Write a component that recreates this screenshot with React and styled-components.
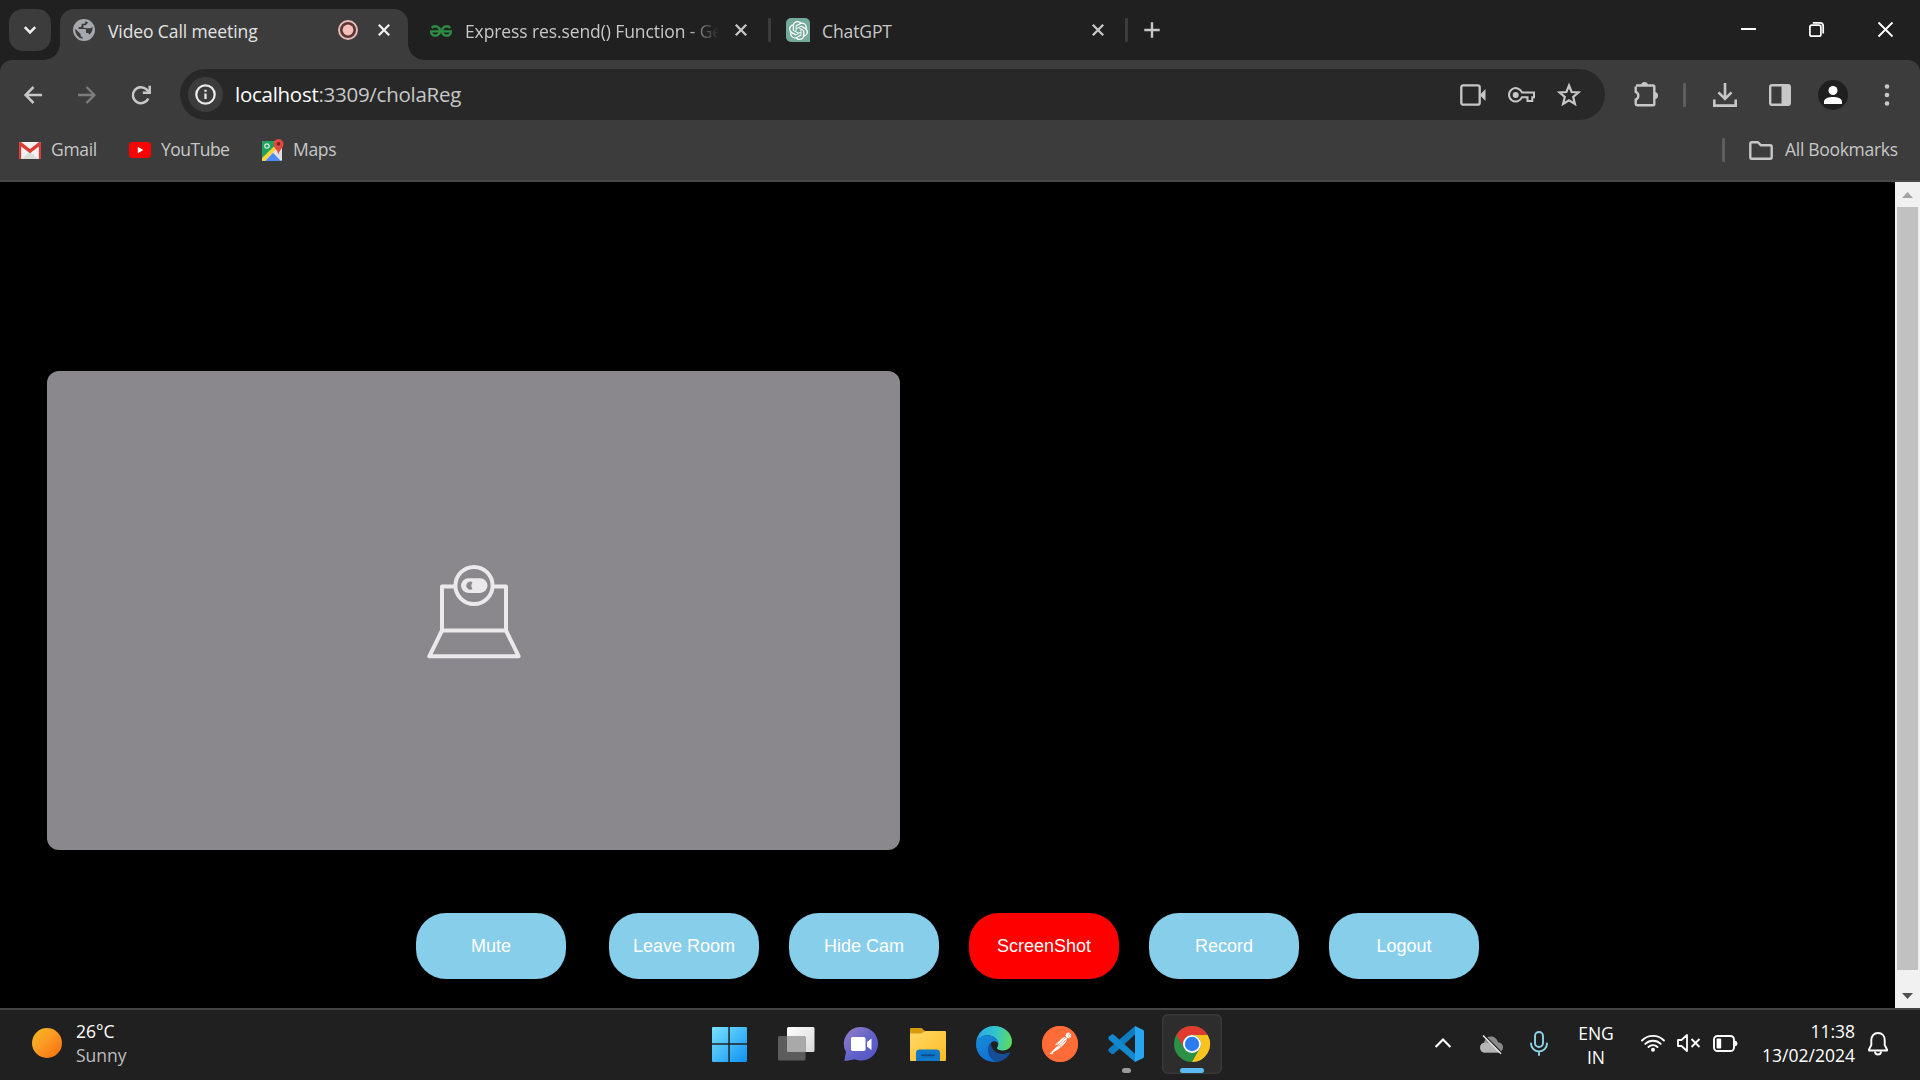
import React from "react";
import styled, { createGlobalStyle } from "styled-components";
import { SiOpenai, SiGeeksforgeeks, SiPostman } from "react-icons/si";

const Global = createGlobalStyle`
  *, *::before, *::after { box-sizing: border-box; }
  html, body { margin: 0; padding: 0; background: #000; overflow: hidden; }
  body { font-family: "Open Sans", "Noto Sans", sans-serif; }
`;

const Screen = styled.div`
  width: 1920px;
  height: 1080px;
  display: flex;
  flex-direction: column;
  background: #202020;
`;

/* ---------- shared ---------- */
const Glyph = styled.svg`
  display: block;
  flex: none;
  overflow: visible;
  margin-left: ${(p) => p.$ml || 0}px;
  margin-top: ${(p) => p.$mt || 0}px;
`;

function Icon({ w, h, ml, mt, children, ...rest }) {
  return (
    <Glyph $ml={ml} $mt={mt} width={w} height={h} viewBox={`0 0 ${w} ${h}`} fill="none" {...rest}>
      {children}
    </Glyph>
  );
}

const Label = styled.span`
  flex: none;
  width: ${(p) => (p.$w ? `${p.$w}px` : "auto")};
  margin-left: ${(p) => p.$ml || 0}px;
  font-size: ${(p) => p.$size || 17.5}px;
  line-height: 24px;
  letter-spacing: ${(p) => p.$ls || 0}px;
  color: ${(p) => p.$color || "#c7c7c7"};
  white-space: nowrap;
`;

const BookmarkLabel = styled(Label)`
  margin-top: -2px;
`;

const Divider = styled.div`
  flex: none;
  width: 3px;
  height: 24px;
  border-radius: 1px;
  margin-left: ${(p) => p.$ml || 0}px;
  background: ${(p) => p.$color || "#3c3c3c"};
`;

/* ---------- tab strip ---------- */
const TabStrip = styled.header`
  flex: none;
  height: 60px;
  padding-left: 9px;
  display: flex;
  align-items: center;
  background: #202020;
`;

const TabSearch = styled.button`
  flex: none;
  width: 42px;
  height: 42px;
  border: 0;
  padding: 0;
  border-radius: 14px;
  display: flex;
  align-items: center;
  justify-content: center;
  background: #3c3c3c;
`;

const ActiveTab = styled.div`
  position: relative;
  flex: none;
  align-self: flex-end;
  width: 348px;
  height: 51px;
  margin-left: 9px;
  padding-bottom: 9px;
  border-radius: 14px 14px 0 0;
  display: flex;
  align-items: center;
  background: #3c3c3c;

  &::before,
  &::after {
    content: "";
    position: absolute;
    bottom: 0;
    width: 16px;
    height: 16px;
  }
  &::before {
    left: -16px;
    background: radial-gradient(circle at 0 0, transparent 15.5px, #3c3c3c 16px);
  }
  &::after {
    right: -16px;
    background: radial-gradient(circle at 100% 0, transparent 15.5px, #3c3c3c 16px);
  }
`;

const TabTitle = styled.div`
  flex: none;
  width: ${(p) => p.$w}px;
  margin-left: ${(p) => p.$ml}px;
  margin-top: 2px;
  white-space: nowrap;
  font-size: 17.5px;
  line-height: 24px;
  letter-spacing: ${(p) => p.$ls || 0}px;
  color: ${(p) => p.$color || "#c7c7c7"};
  ${(p) => p.$fade && "mask-image: linear-gradient(90deg, #000 222px, transparent 254px);"}
`;

const GfgMark = styled(SiGeeksforgeeks)`
  flex: none;
  width: 22px;
  height: 22px;
  margin-left: 22px;
  margin-top: 2px;
  color: #2f8d46;
  stroke: #2f8d46;
  stroke-width: 0.6px;
`;

const GptBadge = styled.div`
  flex: none;
  width: 24px;
  height: 24px;
  margin-left: 15px;
  border-radius: 5px 5px 0 5px;
  display: flex;
  align-items: center;
  justify-content: center;
  background: #74aa9c;
  color: #fff;
  font-size: 19px;
`;

/* ---------- toolbar ---------- */
const ToolbarBack = styled.div`
  flex: none;
  height: 122px;
  display: flex;
  flex-direction: column;
  background: #3c3c3c;
  border-radius: 12px 12px 0 0;
  border-bottom: 2px solid #484848;
`;

const Toolbar = styled.div`
  flex: none;
  height: 69px;
  display: flex;
  align-items: center;
`;

const AddressBar = styled.div`
  flex: none;
  width: 1425px;
  height: 51px;
  margin-left: 29px;
  padding: 0 24px 0 8px;
  border-radius: 26px;
  display: flex;
  align-items: center;
  background: #282828;
`;

const SiteInfo = styled.div`
  flex: none;
  width: 35px;
  height: 35px;
  border-radius: 50%;
  display: flex;
  align-items: center;
  justify-content: center;
  background: #3c3c3c;
`;

const Url = styled.div`
  flex: 1;
  margin-left: 12px;
  margin-top: -2px;
  font-size: 20.5px;
  line-height: 28px;
  letter-spacing: -0.27px;
  color: #c7c7c7;
  b {
    font-weight: 400;
    color: #fff;
  }
`;

const Avatar = styled.div`
  flex: none;
  width: 30px;
  height: 30px;
  margin-left: 27px;
  border-radius: 50%;
  display: flex;
  align-items: center;
  justify-content: center;
  background: #1f1f1f;
`;

const Bookmarks = styled.nav`
  flex: none;
  height: 42px;
  display: flex;
  align-items: center;
  padding: 0 22px 0 19px;
`;

const Spacer = styled.div`
  flex: 1;
`;

/* ---------- page ---------- */
const Viewport = styled.div`
  flex: none;
  height: 826px;
  display: flex;
  background: #000;
`;

const Page = styled.main`
  flex: 1;
  display: flex;
  flex-direction: column;
  padding: 189px 0 0;
`;

const VideoTile = styled.section`
  width: 853px;
  height: 479px;
  margin-left: 47px;
  border-radius: 12px;
  display: flex;
  align-items: center;
  justify-content: center;
  background: #8a888c;
`;

const Controls = styled.div`
  display: flex;
  justify-content: center;
  gap: 30px;
  margin-top: 63px;
`;

const ControlButton = styled.button`
  width: 150px;
  height: 66px;
  padding: 0;
  border: 0;
  border-radius: 30px;
  margin-right: ${(p) => (p.$wide ? 13 : 0)}px;
  background: ${(p) => (p.$danger ? "#ff0000" : "#87ceeb")};
  color: #fff;
  font: 18px/22px "Liberation Sans", Arial, sans-serif;
`;

const Scrollbar = styled.div`
  flex: none;
  width: 25px;
  display: flex;
  flex-direction: column;
  align-items: center;
  background: #f1f1f1;
`;

const ScrollArrow = styled.div`
  width: 25px;
  height: 25px;
  display: flex;
  align-items: center;
  justify-content: center;
`;

const ScrollThumb = styled.div`
  width: 21px;
  height: 763px;
  background: #c1c1c1;
`;

/* ---------- taskbar ---------- */
const Taskbar = styled.footer`
  flex: none;
  height: 72px;
  display: grid;
  grid-template-columns: 695px 530px 1fr;
  border-top: 2px solid #434343;
  background: #202020;
`;

const Weather = styled.div`
  display: flex;
  align-items: center;
  padding: 0 0 4px 32px;
`;

const Sun = styled.div`
  width: 30px;
  height: 30px;
  border-radius: 50%;
  background: linear-gradient(135deg, #f5b81f 5%, #fb9a24 45%, #f9700f 95%);
`;

const Lines = styled.div`
  flex: none;
  display: flex;
  flex-direction: column;
  align-items: ${(p) => p.$align || "flex-start"};
  width: ${(p) => (p.$w ? `${p.$w}px` : "auto")};
  margin-left: ${(p) => p.$ml}px;
  margin-top: ${(p) => p.$mt || 0}px;
`;

const Apps = styled.div`
  display: flex;
  gap: 6px;
  align-items: flex-start;
  padding: 4px 0 0 5px;
`;

const AppSlot = styled.div`
  flex: none;
  width: 60px;
  height: 60px;
  padding-top: 12px;
  border-radius: 6px;
  display: flex;
  flex-direction: column;
  align-items: center;
  background: ${(p) => (p.$active ? "#2d2d2d" : "transparent")};
  box-shadow: ${(p) => (p.$active ? "inset 0 0 0 1.5px #383838" : "none")};
`;

const RunMark = styled.div`
  width: ${(p) => (p.$active ? 24 : 9)}px;
  height: 5px;
  margin-top: 6px;
  border-radius: 3px;
  background: ${(p) => (p.$active ? "#5bbcf5" : "#9a9a9a")};
`;

const PostmanDisc = styled.div`
  width: 36px;
  height: 36px;
  border-radius: 50%;
  background: radial-gradient(circle, #fff 15px, #ff6c37 16px);
  color: #ff6c37;
  font-size: 36px;
  line-height: 0;
`;

const Tray = styled.div`
  display: flex;
  align-items: center;
  padding-bottom: 4px;
`;

/* ---------- icon drawings ---------- */
const CloseX = ({ ml, color = "#c7c7c7" }) => (
  <Icon w={12} h={12} ml={ml} stroke={color} strokeWidth="2.3">
    <path d="M.8 .8 11.2 11.2M11.2 .8 .8 11.2" />
  </Icon>
);

const Globe = () => (
  <Icon w={22} h={22} ml={13}>
    <circle cx="11" cy="11" r="11" fill="#a5a8ac" />
    <path
      d="M2.2 9.8 7.6 15v1.2c0 1 .8 1.9 2 1.9v1.7A8.9 8.9 0 0 1 2.2 9.8ZM12.4 2.2c0 1.700-.6 2.600-1.900 2.600H8.600v2c0 .8-.6 1.200-1.200 1.200H5.600v2h6.200c.8 0 1.200.5 1.200 1.200v2.800h1.200c1.100 0 1.800.6 2.200 1.700a8.900 8.900 0 0 0 3.200-7.600l-2.200 1.200h-3.300L10.500 8.700V6.200h2.200l2.500-2.800Z"
      fill="#3c3c3c"
    />
  </Icon>
);

const RecordingDot = () => (
  <Icon w={20} h={20} ml={70}>
    <circle cx="10" cy="10" r="9" stroke="#e8bcb8" strokeWidth="1.9" fill="#5a3634" />
    <circle cx="10" cy="10" r="5.400" fill="#f5c0bb" />
  </Icon>
);

const LaptopCamera = () => (
  <Icon w={94} h={94} mt={2} stroke="#ebe9ec" strokeWidth="4" strokeLinejoin="round" strokeLinecap="round">
    <path d="M27 21.500H15V65.500H79V21.500H67" />
    <path d="M15 65.500 2.300 91.300H91.700L79 65.500" />
    <circle cx="47" cy="20.500" r="18.600" />
    <rect x="34" y="13.300" width="26.500" height="14.600" rx="7.300" fill="#ebe9ec" stroke="none" />
    <path d="M45.500 17.200A4 4 0 1 0 45.500 24a6 6 0 0 1 0-6.800Z" fill="#8a888c" stroke="none" />
  </Icon>
);

const GmailIcon = () => (
  <Icon w={22} h={17}>
    <rect width="22" height="17" rx="1.500" fill="#f2f2f2" />
    <path d="M3 17 11 9.500 19 17Z" fill="#dcdcdc" />
    <path d="M0 1.500A1.500 1.500 0 0 1 1.500 0H2L11 7 20 0h.5A1.500 1.500 0 0 1 22 1.500V17H19.800V4.500L11 11.200 2.200 4.500V17H0Z" fill="#d93f35" />
  </Icon>
);

const YouTubeIcon = () => (
  <Icon w={22} h={16} ml={33}>
    <rect width="22" height="16" rx="3.500" fill="#f00" />
    <path d="M8.800 4.800 14.300 8 8.800 11.200Z" fill="#fff" />
  </Icon>
);

const MapsIcon = () => (
  <Icon w={22} h={22} ml={33} mt={-1}>
    <rect x="0" y="2" width="20" height="20" rx="1.500" fill="#e8e8e8" />
    <path d="M0 3.500A1.500 1.500 0 0 1 1.500 2H12L14 9 1 21.500 0 20Z" fill="#1fa05d" />
    <path d="M3 22 11 13.800 19 22Z" fill="#4c8bf5" />
    <path d="M0 19 13 6.500 15 9.500 2.500 22H1.500A1.500 1.500 0 0 1 0 20.500Z" fill="#fdd23b" />
    <path d="M12.500 13.500 20 21V12Z" fill="#dfdfdf" />
    <circle cx="5" cy="7" r="2.200" stroke="#d5efe0" strokeWidth="1.200" />
    <path d="M16.500 0A5 5 0 0 1 21.500 5c0 4-4.300 5.500-5 11-.7-5.500-5-7-5-11a5 5 0 0 1 5-5Z" fill="#e04a3f" />
    <circle cx="16.500" cy="4.900" r="1.800" fill="#7b231e" />
  </Icon>
);

const EdgeIcon = () => (
  <Icon w={36} h={36}>
    <defs>
      <linearGradient id="edgeTop" x1="0" y1="12" x2="36" y2="18" gradientUnits="userSpaceOnUse">
        <stop offset="0" stopColor="#28a9e8" />
        <stop offset=".5" stopColor="#32c5cf" />
        <stop offset="1" stopColor="#62dc55" />
      </linearGradient>
      <linearGradient id="edgeLeft" x1="4" y1="12" x2="20" y2="36" gradientUnits="userSpaceOnUse">
        <stop offset="0" stopColor="#1789d8" />
        <stop offset="1" stopColor="#0f6bd0" />
      </linearGradient>
    </defs>
    <path d="M0 17C1 7 8.500 0 18 0c10.500 0 18 7.500 18 15.500 0 5.500-4 9-8.800 9-3.700 0-6.200-1.200-6.200-2.500 0-.8 1.300-1.500 1.300-4 0-4.200-4.300-8.800-11-8.800C5 9.200 1 13 0 17Z" fill="url(#edgeTop)" />
    <path d="M0 17.500C.5 12.500 5 9.200 11.300 9.200c6.700 0 11 4.600 11 8.600-1.500-3.600-8.300-4.300-8.300 3 0 7 8 13.600 15.500 11.500C26 35 22 36 18 36 7.500 36-.5 27.500 0 17.500Z" fill="url(#edgeLeft)" />
    <path d="M14.500 16.500C9.500 22 12 33 20.500 35.900c5.500-.6 10.500-3.500 13.500-8.400.4-.8-.4-1.300-1.200-.9-7.500 3.400-16.800 1-18.300-10.100Z" fill="#154e96" />
  </Icon>
);

const VsCodeIcon = () => (
  <Icon w={36} h={36}>
    <path d="M1 25.800 3.200 27.500a2.400 2.400 0 0 0 3-.1L27 8.500V0L1 22.600a2.200 2.200 0 0 0 0 3.200Z" fill="#0f7cc0" />
    <path d="M1 10.500 3.200 8.800a2.400 2.400 0 0 1 3 .1L27 27.800V36L1 13.700a2.200 2.200 0 0 1 0-3.200Z" fill="#1289cd" />
    <path d="M27 0 34.800 3.700A2 2 0 0 1 36 5.500v25a2 2 0 0 1-1.200 1.800L27 36Z" fill="#28a5f0" />
  </Icon>
);

const ChromeIcon = () => (
  <Icon w={36} h={36}>
    <circle cx="18" cy="18" r="18" fill="#2a9147" />
    <path d="M2.400 9A18 18 0 0 1 33.600 9H18A9 9 0 0 0 10.200 22.500Z" fill="#e23a2e" />
    <path d="M33.600 9A18 18 0 0 1 18 36L25.800 22.500A9 9 0 0 0 18 9Z" fill="#fcc31e" />
    <circle cx="18" cy="18" r="9" fill="#fff" />
    <circle cx="18" cy="18" r="7.200" fill="#2b7cee" />
  </Icon>
);

const WindowsIcon = () => (
  <Icon w={36} h={36} ml={-3}>
    <defs>
      <linearGradient id="win" x1="0" y1="0" x2="36" y2="36" gradientUnits="userSpaceOnUse">
        <stop offset="0" stopColor="#7be6fd" />
        <stop offset="1" stopColor="#0f90f3" />
      </linearGradient>
    </defs>
    <path d="M2 1H17.300V17.300H1V2A1 1 0 0 1 2 1ZM18.800 1H35a1 1 0 0 1 1 1V17.300H18.800ZM1 18.800H17.300V36H2a1 1 0 0 1-1-1ZM18.800 18.800H36V35a1 1 0 0 1-1 1H18.800Z" fill="url(#win)" />
  </Icon>
);

const TaskViewIcon = () => (
  <Icon w={36} h={36}>
    <defs>
      <linearGradient id="tvw" x1="0" y1="0" x2="1" y2="1">
        <stop offset="0" stopColor="#fff" />
        <stop offset="1" stopColor="#d8d8d8" />
      </linearGradient>
    </defs>
    <rect x="9" y="1" width="27.500" height="25" rx="1.500" fill="url(#tvw)" />
    <rect x="0" y="10" width="27.500" height="24.500" rx="1.500" fill="#5c5c5c" />
    <path d="M9 10H26a1.500 1.500 0 0 1 1.500 1.500V26H10.500A1.500 1.500 0 0 1 9 24.500Z" fill="#a9a9a9" />
  </Icon>
);

const ChatIcon = () => (
  <Icon w={36} h={36} ml={-2}>
    <defs>
      <linearGradient id="chat" x1="0" y1="0" x2="1" y2="1">
        <stop offset="0" stopColor="#9c7fc6" />
        <stop offset=".5" stopColor="#6365c8" />
        <stop offset="1" stopColor="#5052c8" />
      </linearGradient>
    </defs>
    <path d="M18.500 1A16.800 16.800 0 1 1 11.500 33.200L2.500 35a1 1 0 0 1-1-1.200L3 26A16.800 16.800 0 0 1 18.500 1Z" fill="url(#chat)" />
    <rect x="8" y="11" width="14.500" height="14" rx="1.800" fill="#fff" />
    <path d="M24 16 28.500 12.500V24L24 20.500Z" fill="#fff" />
  </Icon>
);

const FolderIcon = () => (
  <Icon w={36} h={36}>
    <defs>
      <linearGradient id="fold" x1="0" y1="0" x2="1" y2="1">
        <stop offset="0" stopColor="#ffd968" />
        <stop offset="1" stopColor="#fdbb23" />
      </linearGradient>
    </defs>
    <path d="M0 3A1 1 0 0 1 1 2H11.500L15 5V12H0Z" fill="#d99a0b" />
    <path d="M0 7.500H11L15.500 5H35a1 1 0 0 1 1 1V34a1 1 0 0 1-1 1H1a1 1 0 0 1-1-1Z" fill="url(#fold)" />
    <path d="M6 35V27a3.500 3.500 0 0 1 3.500-3.500h17A3.500 3.500 0 0 1 30 27v8Z" fill="#0f78c8" />
    <path d="M12 29.200H24" stroke="#0b4d8c" strokeWidth="2" strokeLinecap="round" />
  </Icon>
);

const APPS = [
  { id: "start", art: <WindowsIcon /> },
  { id: "tasks", art: <TaskViewIcon /> },
  { id: "chat", art: <ChatIcon /> },
  { id: "files", art: <FolderIcon /> },
  { id: "edge", art: <EdgeIcon /> },
  { id: "postman", art: <PostmanDisc><SiPostman /></PostmanDisc> },
  { id: "code", art: <VsCodeIcon />, running: true },
  { id: "chrome", art: <ChromeIcon />, running: true, active: true },
];

const CONTROLS = [
  { label: "Mute", wide: true },
  { label: "Leave Room" },
  { label: "Hide Cam" },
  { label: "ScreenShot", danger: true },
  { label: "Record" },
  { label: "Logout" },
];

export default function App() {
  return (
    <Screen>
      <Global />
      <TabStrip>
        <TabSearch>
          <Icon w={12} h={8} stroke="#f0f0f0" strokeWidth="2.500">
            <path d="M.8 1.200 6 6.400 11.200 1.200" />
          </Icon>
        </TabSearch>
        <ActiveTab>
          <Globe />
          <TabTitle $w={160} $ml={13} $ls={-0.1} $color="#e3e3e3">Video Call meeting</TabTitle>
          <RecordingDot />
          <CloseX ml={20} color="#f0f0f0" />
        </ActiveTab>
        <GfgMark />
        <TabTitle $w={254} $ml={13} $ls={-0.1} $fade>Express res.send() Function - Ge</TabTitle>
        <CloseX ml={16} />
        <Divider $ml={21} />
        <GptBadge><SiOpenai /></GptBadge>
        <TabTitle $w={250} $ml={12} $ls={-0.1}>ChatGPT</TabTitle>
        <CloseX ml={20} />
        <Divider $ml={21} />
        <Icon w={16} h={16} ml={16} stroke="#c7c7c7" strokeWidth="2.400">
          <path d="M8 .3V15.700M.3 8H15.700" />
        </Icon>
        <Icon w={15} h={2} ml={581} mt={-2}>
          <rect width="15" height="2" fill="#fff" />
        </Icon>
        <Icon w={15} h={15} ml={53} mt={-1} stroke="#fff" strokeWidth="1.700">
          <rect x=".9" y="3.200" width="11" height="11" rx="2" />
          <path d="M3.800 .9H11a3.200 3.200 0 0 1 3.200 3.200V11.500" />
        </Icon>
        <Icon w={15} h={15} ml={54} mt={-1} stroke="#fff" strokeWidth="1.800">
          <path d="M.5 .5 14.500 14.500M14.500 .5 .5 14.500" />
        </Icon>
      </TabStrip>

      <ToolbarBack>
        <Toolbar>
          <Icon w={18} h={18} ml={24} stroke="#c7c7c7" strokeWidth="2.500">
            <path d="M18 9H1.800M9.500 1 1.600 9 9.500 17" />
          </Icon>
          <Icon w={18} h={18} ml={36} stroke="#7d7d7d" strokeWidth="2.300">
            <path d="M0 9H16.200M8.500 1 16.400 9 8.500 17" />
          </Icon>
          <Icon w={20} h={20} ml={35} stroke="#c7c7c7" strokeWidth="2.500">
            <path d="M17.300 13.400A8 8 0 1 1 15.500 4.400L18 7" />
            <path d="M18.700 .8V7.800H11.800" />
          </Icon>
          <AddressBar>
            <SiteInfo>
              <Icon w={21} h={21}>
                <circle cx="10.500" cy="10.500" r="9.200" stroke="#e8e8e8" strokeWidth="2.300" />
                <path d="M10.500 9.400V15M10.500 5.700V7.700" stroke="#e8e8e8" strokeWidth="2.300" />
              </Icon>
            </SiteInfo>
            <Url><b>localhost</b>:3309/cholaReg</Url>
            <Icon w={26} h={22} stroke="#c7c7c7" strokeWidth="2.300">
              <rect x="1.300" y="1.300" width="18.400" height="19.400" rx="2" />
              <path d="M19.700 11 25.500 5V17Z" fill="#c7c7c7" stroke="none" />
            </Icon>
            <Icon w={27} h={16} ml={22} stroke="#c7c7c7" strokeWidth="2">
              <path d="M14 5.500H26V10.200H24.300V14H19.500V10.200H14A6.700 6.700 0 1 1 14 5.500Z" />
              <circle cx="7.700" cy="7.900" r="3" fill="#c7c7c7" stroke="none" />
            </Icon>
            <Icon w={24} h={24} ml={22} stroke="#c7c7c7" strokeWidth="2.200">
              <path d="M12 2.500 14.600 9 21.500 9.500 16.200 14 17.900 20.900 12 17.200 6.100 20.900 7.800 14 2.500 9.500 9.400 9Z" />
            </Icon>
          </AddressBar>
          <Icon w={25} h={25} ml={28} mt={-3} stroke="#c7c7c7" strokeWidth="2.400">
            <path d="M3 4.500H20a1.300 1.300 0 0 1 1.300 1.300V23a1.300 1.300 0 0 1-1.300 1.300H4A1.300 1.300 0 0 1 2.700 23V18.600a4.200 4.200 0 0 0 0-7.800V5.500" />
            <path d="M8 4.500a3.500 3.500 0 0 1 7 0ZM21.500 11a3.500 3.500 0 0 1 0 7Z" fill="#c7c7c7" stroke="none" />
          </Icon>
          <Divider $ml={25} $color="#5e5e5e" />
          <Icon w={24} h={24} ml={27} stroke="#c7c7c7" strokeWidth="2.600">
            <path d="M12 0V15M5.500 9.300 12 15.800 18.500 9.300M1.300 16.500V22.600H22.700V16.500" />
          </Icon>
          <Icon w={22} h={22} ml={32}>
            <rect x="1.200" y="1.200" width="19.600" height="19.600" rx="1.800" stroke="#c7c7c7" strokeWidth="2.400" />
            <rect x="12.500" y="1" width="8.500" height="20" fill="#c7c7c7" />
          </Icon>
          <Avatar>
            <Icon w={18} h={18} fill="#fff">
              <circle cx="9" cy="4.500" r="4.500" />
              <path d="M0 18V15.500C0 12.300 5 11 9 11s9 1.300 9 4.500V18Z" />
            </Icon>
          </Avatar>
          <Icon w={6} h={24} ml={36} fill="#c7c7c7">
            <circle cx="3" cy="3.500" r="2.300" />
            <circle cx="3" cy="12" r="2.300" />
            <circle cx="3" cy="20.500" r="2.300" />
          </Icon>
        </Toolbar>
        <Bookmarks>
          <GmailIcon />
          <BookmarkLabel $ml={10} $w={45} $ls={-0.3}>Gmail</BookmarkLabel>
          <YouTubeIcon />
          <BookmarkLabel $ml={10} $w={68} $ls={-0.5}>YouTube</BookmarkLabel>
          <MapsIcon />
          <BookmarkLabel $ml={9} $ls={-0.3}>Maps</BookmarkLabel>
          <Spacer />
          <Divider $color="#5e5e5e" />
          <Icon w={24} h={19} ml={24} stroke="#c7c7c7" strokeWidth="2.400" strokeLinejoin="round">
            <path d="M1.300 2.600A1.300 1.300 0 0 1 2.600 1.300H9L12 4.300H21.400A1.300 1.300 0 0 1 22.700 5.600V16.400A1.300 1.300 0 0 1 21.400 17.700H2.600A1.300 1.300 0 0 1 1.300 16.400Z" />
          </Icon>
          <BookmarkLabel $ml={12} $w={113} $ls={-0.3}>All Bookmarks</BookmarkLabel>
        </Bookmarks>
      </ToolbarBack>

      <Viewport>
        <Page>
          <VideoTile>
            <LaptopCamera />
          </VideoTile>
          <Controls>
            {CONTROLS.map((c) => (
              <ControlButton key={c.label} $wide={c.wide} $danger={c.danger}>{c.label}</ControlButton>
            ))}
          </Controls>
        </Page>
        <Scrollbar>
          <ScrollArrow>
            <Icon w={11} h={6}><path d="M0 6 5.500 0 11 6Z" fill="#a3a3a3" /></Icon>
          </ScrollArrow>
          <ScrollThumb />
          <Spacer />
          <ScrollArrow>
            <Icon w={11} h={6}><path d="M0 0 5.500 6 11 0Z" fill="#505050" /></Icon>
          </ScrollArrow>
        </Scrollbar>
      </Viewport>

      <Taskbar>
        <Weather>
          <Sun />
          <Lines $ml={14}>
            <Label $color="#fff">26°C</Label>
            <Label $color="#bdbdbd">Sunny</Label>
          </Lines>
        </Weather>
        <Apps>
          {APPS.map((a) => (
            <AppSlot key={a.id} $active={a.active}>
              {a.art}
              {a.running && <RunMark $active={a.active} />}
            </AppSlot>
          ))}
        </Apps>
        <Tray>
          <Icon w={16} h={10} ml={210} stroke="#fff" strokeWidth="2.100">
            <path d="M.6 9 8 1.400 15.400 9" />
          </Icon>
          <Icon w={24} h={20} ml={28} mt={3}>
            <path d="M5 17.500a5 5 0 0 1 0-9.700C6 3 9 1.500 12 1.500c4 0 6 2.500 7 5.700 3 .3 5 2.300 5 5s-2 5.300-5 5.300Z" fill="#8a8a8a" />
            <path d="M5 17.500a5 5 0 0 1 0-9.700c3-1 5 0 7 1.700l10 6.500c-1 1-2 1.500-3 1.500Z" fill="#b5b5b5" />
            <path d="M5.500 .5 23 18" stroke="#202020" strokeWidth="1.500" />
            <path d="M4 .5 22 18.800" stroke="#e8e8e8" strokeWidth="1.500" />
          </Icon>
          <Icon w={18} h={25} ml={27} stroke="#8ed4e8" strokeWidth="1.900" strokeLinecap="round">
            <rect x="5" y="1" width="8" height="15" rx="4" />
            <path d="M1 12.500a8 8 0 0 0 16 0M9 20.500V24" />
          </Icon>
          <Lines $ml={18} $mt={4} $w={60} $align="center">
            <Label $color="#fff">ENG</Label>
            <Label $color="#fff">IN</Label>
          </Lines>
          <Icon w={24} h={18} ml={15} stroke="#fff" strokeWidth="1.900" strokeLinecap="round">
            <path d="M1 6.500a15.500 15.500 0 0 1 22 0M4.300 9.900a10.900 10.900 0 0 1 15.400 0M7.500 13a6.300 6.300 0 0 1 9 0" />
            <circle cx="12" cy="15.800" r="2" fill="#fff" stroke="none" />
          </Icon>
          <Icon w={24} h={18} ml={12} stroke="#fff" strokeWidth="1.800" strokeLinejoin="round">
            <path d="M1 6H4.500L10 1V17L4.500 12H1Z" />
            <path d="M14.500 5 22.500 13M22.500 5 14.500 13" />
          </Icon>
          <Icon w={24} h={17} ml={12}>
            <rect x="1" y="1" width="20" height="15" rx="3.500" stroke="#fff" strokeWidth="1.900" />
            <rect x="3.600" y="3.600" width="4.600" height="9.800" rx="1" fill="#fff" />
            <path d="M21.500 6a2.500 2.500 0 0 1 0 5Z" fill="#fff" stroke="#fff" />
          </Icon>
          <Lines $ml={17} $w={101} $align="flex-end">
            <Label $color="#fff">11:38</Label>
            <Label $color="#fff">13/02/2024</Label>
          </Lines>
          <Icon w={20} h={23} ml={13} stroke="#fff" strokeWidth="1.900" strokeLinejoin="round">
            <path d="M10 1C5.700 1 3.300 4.200 3.300 8v5L1 17.500V18.500H19V17.500L16.700 13V8C16.700 4.200 14.300 1 10 1Z" />
            <path d="M7 19.500a3 3 0 0 0 6 0" />
          </Icon>
        </Tray>
      </Taskbar>
    </Screen>
  );
}
